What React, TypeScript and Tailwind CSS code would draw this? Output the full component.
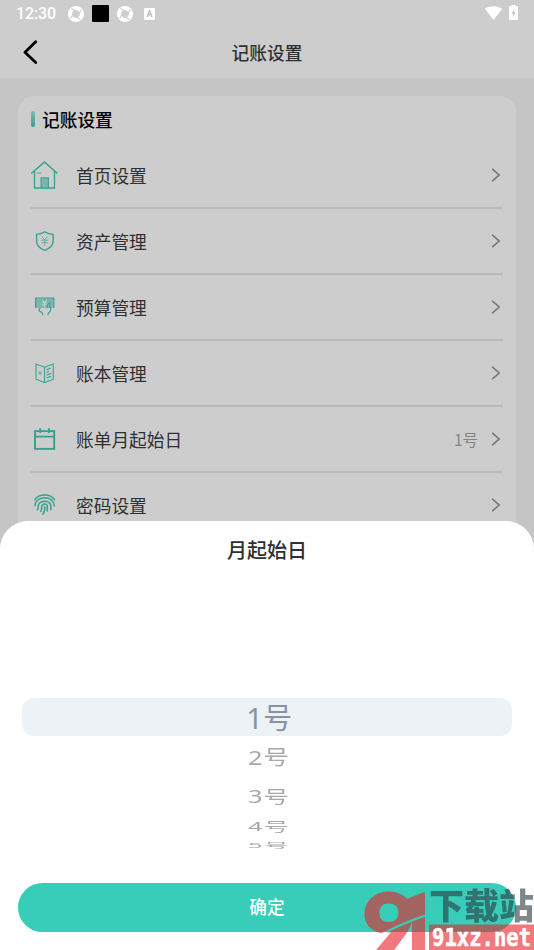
import React from 'react';

const teal = '#35a18f';

const HomeIcon = () => (
  <svg width="28" height="28" viewBox="0 0 28 28" fill="none" stroke={teal} strokeWidth="1.3">
    <path d="M1.2 12.5 L14.5 1 L27.4 12.5" strokeWidth="1.5" />
    <path d="M4.5 9.8 V27 H24.5 V9.8" />
    <rect x="11" y="16.8" width="7.4" height="10.2" fill="#7bb5ab" strokeWidth="1" />
    <path d="M6.5 12.2 H11.5" stroke="#8bbbb3" strokeWidth="2" />
  </svg>
);

const ShieldIcon = () => (
  <svg width="28" height="28" viewBox="0 0 28 28" fill="none" stroke={teal} strokeWidth="1.4">
    <path d="M14.7 4.8 C12 6.8 9 7.3 6.6 7.4 V14 C6.6 18.5 9.8 21.5 14.7 23.3 C19.6 21.5 23.1 18.5 23.1 14 V7.4 C20 7.3 17.3 6.7 14.7 4.8 Z" />
    <path d="M12 9.5 L14.7 13 L17.4 9.5 M11.2 13.2 H18.2 M11.2 15.8 H18.2 M14.7 13 V19" stroke="#69ada1" strokeWidth="1" />
  </svg>
);

const BudgetIcon = () => (
  <svg width="28" height="28" viewBox="0 0 28 28" fill="none" stroke={teal} strokeWidth="1.2">
    <rect x="6" y="5.3" width="17" height="9.5" fill="#7bb5ab" stroke="none" />
    <path d="M5.6 15 V5 H23.8 V15" />
    <path d="M12.4 7 L14.6 9.5 L16.8 7 M12 9.8 H17.2 M12 11.8 H17.2 M14.6 9.5 V13.8" stroke="#c3d4d1" strokeWidth="1" />
    <path d="M10.5 15 Q8.2 17 9.8 18.2 L12 19.6 Q12.7 20.2 12.7 22.3 M20.4 14 Q21.3 17.5 19.7 18.8 Q17.9 20 17.9 22.3" />
    <path d="M17.2 15.2 V11.8 L19.7 9.7 V15" strokeWidth="1" />
  </svg>
);

const BookIcon = () => (
  <svg width="28" height="28" viewBox="0 0 28 28" fill="none" stroke={teal} strokeWidth="1">
    <path d="M14.5 8.2 L6 5 V20.2 L14.5 23.5 L23.3 20.2 V5 L14.5 8.2 V23.5" stroke="#46a596" strokeWidth="1.2" />
    <path d="M10 11 L10.8 13 L12.5 13.2 L11.2 14.6 L11.5 16.2 L10 15.2 L8.6 16.2 L8.9 14.6 L7.8 13.2 L9.3 13 Z" fill="#7bb5ab" stroke="none" />
    <path d="M16.5 10.7 L20.8 9 M16.5 13.5 L19 12.6 M16.5 16.2 L21.3 14.3 M16.5 19 L21.3 17.2" strokeWidth="1.1" />
  </svg>
);

const CalendarIcon = () => (
  <svg width="28" height="28" viewBox="0 0 28 28" fill="none" stroke={teal} strokeWidth="1.9">
    <rect x="5" y="6.1" width="19.2" height="17.8" />
    <path d="M5 11.6 H24 M10.2 3.2 V8 M19 3.2 V8" />
  </svg>
);

const FingerprintIcon = () => (
  <svg width="28" height="28" viewBox="0 0 28 28" fill="none" stroke={teal} strokeWidth="1.5" strokeLinecap="round">
    <path d="M4.8 8.6 C9 2.4 20 2.4 24.6 8.6" />
    <path d="M5 14.8 C5.4 4 23.8 4 24.2 14.8" />
    <path d="M7.4 18.8 C8.6 17.8 7.6 16 8.4 14.2 C10 8.8 19.4 8.8 20.8 14.2 V18.5" />
    <path d="M10.8 20.4 C12.4 18.5 11 16.4 12.1 14.4 C13.2 12.6 16.6 12.6 17.3 14.8 V20" />
    <path d="M14.8 15.7 C14.9 19 14.6 21.3 13 23.2" />
  </svg>
);

const ChevronIcon = () => (
  <svg width="10" height="14" viewBox="0 0 10 14" fill="none" stroke="#777" strokeWidth="1.6">
    <path d="M1.2 0.8 L8.2 7 L1.2 13.2" />
  </svg>
);

const ShutterIcon = () => (
  <svg width="16" height="16" viewBox="0 0 16 16">
    <circle cx="8" cy="8" r="8" fill="#fff" />
    <path d="M5.5 4.4 H10 L11.6 6.5 V10 L9.5 11.6 H6 L4.4 9.5 V6 Z" fill="#cdcdcd" />
    <path d="M3.4 2.6 L8 5 M13.4 3.4 L11 8 M12.6 13.4 L8 11 M2.6 12.6 L5 8" stroke="#cdcdcd" strokeWidth="1.1" />
  </svg>
);

const StatusBar = () => (
  <div className="h-[27px] flex items-center pl-4 pr-4 text-white">
    <span className="w-[41px] font-[Roboto,sans-serif] text-[16px] font-medium leading-none tracking-[-0.1px]">12:30</span>
    <div className="flex items-center ml-[11px]">
      <ShutterIcon />
      <div className="w-[17px] h-[17px] ml-2 mr-2 rounded-[1px] bg-black" />
      <ShutterIcon />
      <div className="w-[11px] h-[12px] ml-[11px] rounded-[1px] bg-white text-[#bbb] font-[Roboto,sans-serif] text-[9px] font-bold leading-[12px] text-center">A</div>
    </div>
    <svg className="ml-auto -mt-[2px]" width="17" height="14" viewBox="0 0 17 14" fill="#fff">
      <path d="M0 3 C4 -0.7 13 -0.7 17 3 L8.5 14 Z" />
    </svg>
    <svg className="ml-[7px] -mt-[2px]" width="9" height="15" viewBox="0 0 9 15" fill="#fff">
      <path d="M2.5 0 H6.5 V1.3 H9 V15 H0 V1.3 H2.5 Z" />
      <path d="M5.6 4 L2.6 8.5 H4.5 L3.8 12 L6.5 7.4 H4.8 Z" fill="#bbb" />
    </svg>
  </div>
);

const rows = [
  { label: '首页设置', icon: <HomeIcon /> },
  { label: '资产管理', icon: <ShieldIcon /> },
  { label: '预算管理', icon: <BudgetIcon /> },
  { label: '账本管理', icon: <BookIcon /> },
  { label: '账单月起始日', icon: <CalendarIcon />, value: '1号' },
  { label: '密码设置', icon: <FingerprintIcon /> },
];

// The further an option is from the selection, the flatter it is
const days = [
  { label: '2号', height: 'h-[44px]', scale: 'scale-y-[0.8]' },
  { label: '3号', height: 'h-[33px]', scale: 'scale-y-[0.69]' },
  { label: '4号', height: 'h-[27px]', scale: 'scale-y-[0.51]' },
  { label: '5号', height: 'h-[11px]', scale: 'scale-y-[0.27]' },
];

const Watermark = () => (
  <svg className="absolute right-0 bottom-0" width="174" height="66" viewBox="360 884 174 66">
    <defs>
      <mask id="slash" maskUnits="userSpaceOnUse" x="360" y="884" width="174" height="66">
        <rect x="360" y="884" width="174" height="66" fill="#fff" />
        <path d="M370 941 Q398 924 430 914" stroke="#000" strokeWidth="2.2" fill="none" />
      </mask>
    </defs>
    <g opacity="0.6">
      <g mask="url(#slash)" fill="#e92128" stroke="#e92128" strokeWidth="2">
        <text x="362" y="958" textLength="54" lengthAdjust="spacingAndGlyphs" fontFamily="Lato, sans-serif" fontWeight="900" fontSize="89">9</text>
        <text x="396" y="949" textLength="40" lengthAdjust="spacingAndGlyphs" fontFamily="Roboto, sans-serif" fontWeight="900" fontSize="77">1</text>
      </g>
      <text x="429" y="919" textLength="105" lengthAdjust="spacingAndGlyphs" fontFamily="'Noto Sans CJK SC', sans-serif" fontWeight="900" fontSize="35" fill="#2b3842">下载站</text>
      <rect x="429" y="924.5" width="105" height="25.5" fill="#e92128" />
    </g>
    <text x="432" y="945.5" textLength="99" lengthAdjust="spacingAndGlyphs" fontFamily="'DejaVu Sans Mono', monospace" fontWeight="700" fontSize="24" fill="#fff" stroke="#fff" strokeWidth="0.5">91xz.net</text>
  </svg>
);

const App = () => {
  return (
    <div className="relative w-[534px] h-[950px] overflow-hidden bg-[#c5c5c5] font-['Noto_Sans_CJK_SC',sans-serif] text-[#303030]">
      <header className="h-[78px] bg-[#cdcdcd]">
        <StatusBar />
        <div className="h-[51px] grid grid-cols-[60px_1fr_60px] items-center">
          <svg className="ml-[23px] -mt-[2px]" width="15" height="24" viewBox="0 0 15 24" fill="none" stroke="#000" strokeWidth="2.8" strokeLinecap="round" strokeLinejoin="round">
            <path d="M12.7 1.8 L2 12.2 L12.7 22.5" />
          </svg>
          <h1 className="text-center text-[17.7px] font-medium leading-none">记账设置</h1>
        </div>
      </header>

      <main className="mx-[18px] mt-[18px] h-[500px] rounded-[16px] bg-[#cdcdcd] pl-[13px] pr-[13px]">
        <div className="h-[47px] flex items-center">
          <div className="-mt-[1px] w-1 h-4 rounded-full bg-linear-to-b from-[#7fb8ae] to-[#2fa08c]" />
          <h2 className="ml-[7px] text-[17.7px] font-medium leading-none text-black">记账设置</h2>
        </div>
        {rows.map(row => (
          <div key={row.label} className="h-[66px] pt-[2px] flex items-center border-b-2 border-[#b9b9b9]">
            <div className="-ml-[1px] -mt-[2px] w-[46px]">{row.icon}</div>
            <span className="text-[17.7px] leading-none">{row.label}</span>
            <span className="ml-auto mr-[13px] text-[15.5px] leading-none text-[#848484]">{row.value}</span>
            <div className="mr-[2px] -mt-[2px]"><ChevronIcon /></div>
          </div>
        ))}
      </main>

      <section className="absolute left-0 right-0 bottom-0 h-[429px] rounded-t-[28px] bg-white px-[18px] flex flex-col">
        <h2 className="h-[57px] text-center text-[20px] font-medium leading-[57px]">月起始日</h2>
        <div className="mt-[120px] mx-1 h-[38px] shrink-0 rounded-[12px] bg-[#edf2f6] flex items-center justify-center font-['Noto_Sans','Noto_Sans_CJK_SC',sans-serif] text-[29px] leading-none text-[#8993a3]">
          <span className="pl-[5px] tracking-[0.5px]">1号</span>
        </div>
        <div className="h-[147px] shrink-0 pl-[4px] flex flex-col items-center font-['Noto_Sans','Noto_Sans_CJK_SC',sans-serif] text-[25.5px] text-[#a8a8a8]">
          {days.map(day => (
            <div key={day.label} className={`${day.height} flex items-center leading-none`}>
              <span className={`block ${day.scale} tracking-[1px]`}>{day.label}</span>
            </div>
          ))}
        </div>
        <button className="h-[49px] shrink-0 rounded-full bg-[#38cdb8] pb-[2px] text-[17.7px] font-medium leading-none text-white">确定</button>
      </section>

      <Watermark />
    </div>
  );
};

export default App;
